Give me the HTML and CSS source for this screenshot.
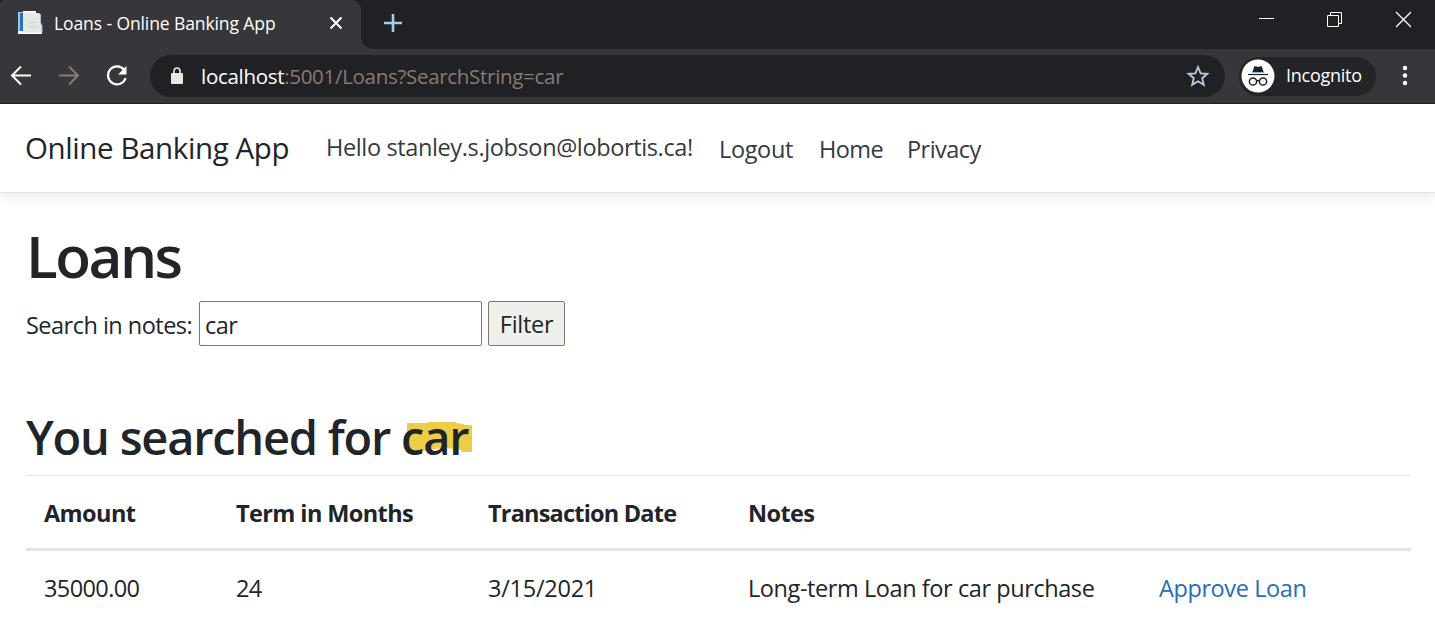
FILE: index.html
```
<!DOCTYPE html>
<html lang="en">
<head>
<meta charset="utf-8">
<title>Loans - Online Banking App</title>
<link rel="stylesheet" href="styles.css">
</head>
<body>
<div class="browser">
  <div class="tabstrip">
    <div class="tab">
      <svg class="favicon" width="26" height="26" viewBox="0 0 26 26">
        <path d="M1 2h6v22H1z" fill="#9cc3e6"/><path d="M3 3h3v18H3z" fill="#2b71b8"/>
        <path d="M6 1h13v2h3l2 2v8l1 3v7H6z" fill="#e6e8e3"/><path d="M1 21h5v1.500h19V24H1zM6 1h13v1.500H6z" fill="#fff"/>
        <path d="M12.500 12.500h7M12.500 17h8" stroke="#a5c5df" stroke-dasharray="2 1" fill="none"/>
        <path d="M23.500 4v9l1.500 3v6" stroke="#9cc3e6" fill="none"/>
      </svg>
      <span class="tab-title">Loans - Online Banking App</span>
      <svg class="tab-close" width="14" height="14" viewBox="0 0 14 14"><path d="M1.500 1.500l11 11M12.500 1.500l-11 11" stroke="#fff" stroke-width="2.100"/></svg>
    </div>
    <svg class="new-tab" width="82" height="49" viewBox="0 0 82 49"><path d="M-5 0h87v49H14Q1 48 1 36V10Q1 3-5 0z" fill="#202124"/><path d="M33 14v18M24 23h18" stroke="#a9cbe4" stroke-width="2.600"/></svg>
    <div class="window-buttons">
      <svg width="17" height="17" viewBox="0 0 17 17"><path d="M1 7.500h15" stroke="#fff"/></svg>
      <svg width="17" height="17" viewBox="0 0 17 17"><path d="M1.500 4.500h11v11h-11zM4.500 4V1.500h11v11H13" fill="none" stroke="#fff"/></svg>
      <svg width="17" height="17" viewBox="0 0 17 17"><path d="M2 1l15 15M17 1L2 16" stroke="#fff" stroke-width="1.300"/></svg>
    </div>
  </div>
  <div class="toolbar">
    <div class="nav-buttons">
      <svg width="22" height="22" viewBox="0 0 22 22" fill="none" stroke="#fff" stroke-width="2"><path d="M21 10.500H2.500M11 1.500l-9 9 9 9"/></svg>
      <svg width="22" height="22" viewBox="0 0 22 22" fill="none" stroke="#8a7b70" stroke-width="2"><path d="M1 10.500h18.500M11 1.500l9 9-9 9"/></svg>
      <svg width="22" height="22" viewBox="0 0 22 22"><path d="M18 4.700A9 9 0 1 0 19.600 13" fill="none" stroke="#fff" stroke-width="2.200"/><path d="M20.500 1v8.500H12z" fill="#fff"/></svg>
    </div>
    <div class="address">
      <svg class="lock" width="14" height="18" viewBox="0 0 14 18"><rect x="1" y="6" width="12" height="11" rx="1" fill="#e6e8e3"/><path d="M4 7V4a3 3 0 0 1 6 0v3" fill="none" stroke="#e6e8e3" stroke-width="1.700"/></svg>
      <span class="url"><span class="url-host">localhost</span><span class="url-path">:5001/Loans?SearchString=car</span></span>
      <svg class="star" width="24" height="24" viewBox="0 0 24 24"><path d="M12 3l2.600 6.300 6.800.500-5.200 4.400 1.600 6.600L12 17.200l-5.800 3.600 1.600-6.600-5.200-4.400 6.800-.500z" fill="none" stroke="#b3cfe3" stroke-width="1.800"/></svg>
    </div>
    <div class="incognito">
      <svg width="34" height="34" viewBox="0 0 34 34"><circle cx="17" cy="17" r="16.500" fill="#fff"/><path d="M13.500 7l3.500 1 3.500-1 2.500 7H11z" fill="#202124"/><path d="M11 13.500h12" stroke="#8db9dc"/><path d="M7 15.500h20" stroke="#202124" stroke-width="1.200"/><g fill="none" stroke="#202124" stroke-width="1.500"><circle cx="12" cy="22.500" r="3.600"/><circle cx="22" cy="22.500" r="3.600"/><path d="M15.500 22q1.500-1 3 0"/></g></svg>
      <span class="incognito-label">Incognito</span>
    </div>
    <svg class="menu" width="6" height="22" viewBox="0 0 6 22" fill="#fff"><circle cx="3" cy="3" r="2.200"/><circle cx="3" cy="10.500" r="2.200"/><circle cx="3" cy="18" r="2.200"/></svg>
  </div>
</div>
<header class="navbar">
  <a class="brand">Online Banking App</a>
  <span class="hello">Hello stanley.s.jobson@lobortis.ca!</span>
  <a class="link logout">Logout</a>
  <a class="link home">Home</a>
  <a class="link privacy">Privacy</a>
</header>
<main class="content">
  <h1 class="title">Loans</h1>
  <form class="search">
    <label class="search-label" for="q">Search in notes:</label>
    <input class="search-input" id="q" type="text" value="car">
    <button class="search-button" type="button">Filter</button>
  </form>
  <h2 class="result">You searched for <span class="mark"><svg class="highlight" width="66" height="31" viewBox="0 0 66 31"><path d="M0 1h21V0h28v1l8 1v1h8v27h-9l-4-3-18-1-17 3H4l-4-3z" fill="#eecd46"/></svg><span class="mark-text">car</span></span></h2>
  <table class="loans">
    <colgroup><col class="c1"><col class="c2"><col class="c3"><col class="c4"><col></colgroup>
    <thead><tr><th>Amount</th><th>Term in Months</th><th class="th-date">Transaction Date</th><th>Notes</th><th></th></tr></thead>
    <tbody><tr><td class="num">35000.00</td><td class="num">24</td><td class="date">3/15/2021</td><td class="note">Long-term Loan for car purchase</td><td><a class="approve">Approve Loan</a></td></tr></tbody>
  </table>
</main>
</body>
</html>
```
FILE: styles.css
```
* { box-sizing: border-box; }
body { margin: 0; height: 625px; overflow: hidden; background: #fff; color: #212529; font: 23.5px/36px "Open Sans", "Noto Sans", sans-serif; white-space: nowrap; }
svg { display: block; flex: none; }

.browser { height: 104px; background: #37363b; border-bottom: 1px solid #202124; }
.tabstrip { display: flex; height: 49px; background: #202124; }
.tab { display: flex; align-items: center; width: 360px; height: 49px; padding: 0 17px 3px 17px; background: #37363b; border-radius: 5px 8px 0 0; }
.tab-title { flex: 1; margin: -1px 0 0 11px; color: #fff; font-size: 17.5px; letter-spacing: -0.1px; }
.new-tab { background: #37363b; }
.window-buttons { display: flex; gap: 51px; margin: 11px 24px 0 auto; }
.toolbar { display: flex; align-items: center; height: 54px; }
.nav-buttons { display: flex; gap: 26px; padding-left: 10px; }
.address { display: flex; align-items: center; width: 1075px; height: 42px; margin-left: 22px; padding: 0 15px 0 20px; border-radius: 21px; background: #202124; }
.url { flex: 1; margin-left: 17px; font-size: 20.5px; letter-spacing: -0.3px; }
.url-host { color: #fff; }
.url-path { color: #8a7b70; }
.incognito { display: flex; align-items: center; width: 137px; height: 39px; margin-left: 14px; padding-left: 2px; border-radius: 20px; background: #232427; color: #fff; }
.incognito-label { margin: -2px 0 0 11px; font-size: 18px; letter-spacing: -0.25px; }
.menu { margin-left: 26px; }

.navbar { display: flex; align-items: center; height: 89px; padding-left: 26px; border-bottom: 1px solid #e4e5e3; box-shadow: 0 7px 9px rgba(0, 0, 0, .06); }
.brand { width: 300px; margin-left: -1px; margin-right: 1px; font-size: 29.5px; letter-spacing: -0.4px; }
.hello { width: 393px; margin-top: -2px; color: #343a40; letter-spacing: -0.37px; }
.link { margin-top: 2px; color: #343a40; letter-spacing: -0.55px; }
.logout { width: 100px; letter-spacing: -0.35px; }
.home { width: 88px; }

.content { padding: 26px 24px 0 26px; }
.title { margin: 0; font-size: 58.5px; line-height: 72px; font-weight: 600; letter-spacing: -2.5px; }
.search { display: flex; height: 45px; margin-top: 10px; }
.search-label { width: 173px; line-height: 49px; letter-spacing: -0.52px; }
.search-input { width: 283px; height: 45px; padding: 2px 5px 0; border: 1px solid #85766b; border-radius: 2px; color: #212529; background: #fff; font: inherit; letter-spacing: -0.5px; }
.search-button { width: 77px; height: 45px; margin-left: 6px; padding: 1px 0 0; border: 1px solid #85766b; border-radius: 2px; color: #212529; background: #efefec; font: inherit; letter-spacing: -0.3px; }
.result { margin: 62px 0 0; font-size: 47px; line-height: 58px; font-weight: 600; letter-spacing: -1.23px; }
.mark { position: relative; display: inline-block; }
.highlight { position: absolute; left: 6px; top: 14px; }
.mark-text { position: relative; }
.loans { width: 100%; margin-top: 9px; border-collapse: collapse; table-layout: fixed; }
.c1 { width: 192px; }
.c2 { width: 252px; }
.c3 { width: 260px; }
.c4 { width: 411px; }
.loans th, .loans td { padding: 1px 0 0 18px; text-align: left; }
.loans th { height: 74px; border-top: 1px solid #e4e5e3; border-bottom: 3px solid #e4e5e0; font-weight: 700; letter-spacing: -0.6px; }
.loans .th-date { letter-spacing: -0.8px; }
.loans td { height: 74px; }
.num { letter-spacing: -0.6px; }
.date { letter-spacing: -0.25px; }
.note { letter-spacing: -0.42px; }
.approve { color: #286db5; letter-spacing: -0.4px; }
```
